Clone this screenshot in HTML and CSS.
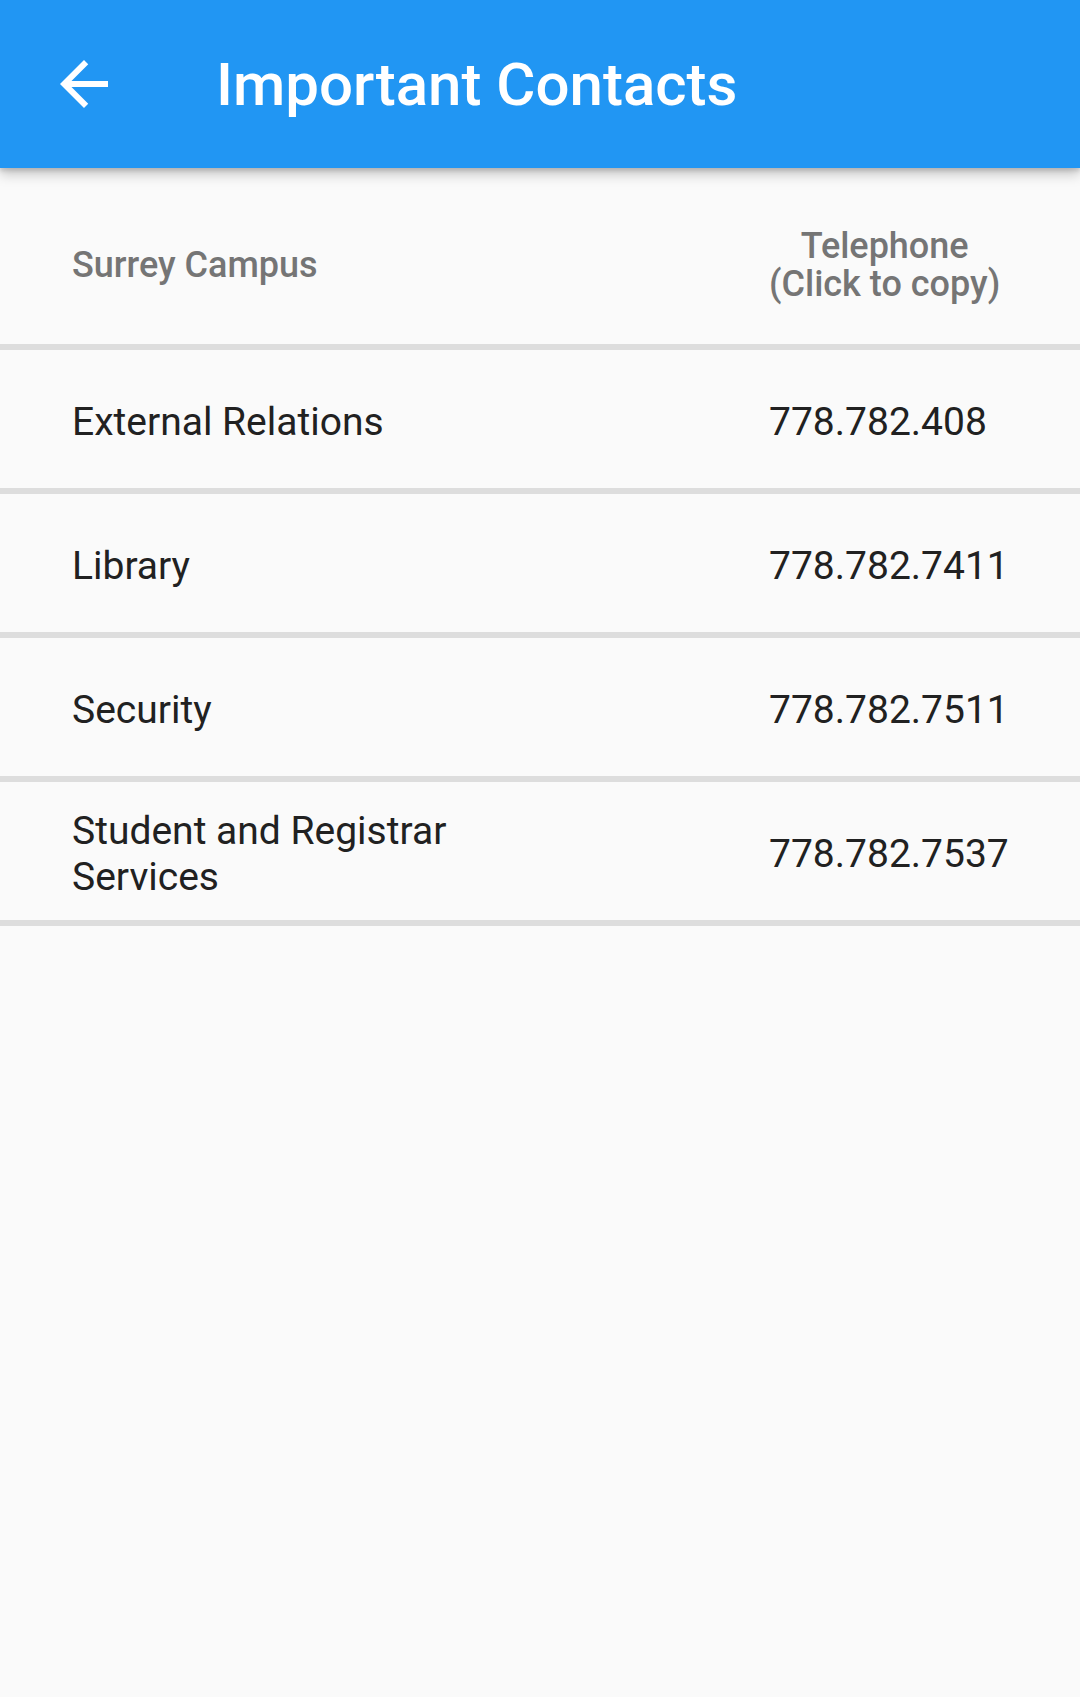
FILE: index.html
```html
<!DOCTYPE html>
<html>
<head>
<meta charset="utf-8">
<link rel="stylesheet" href="styles.css">
</head>
<body>
<header class="appbar">
  <div class="leading">
    <svg viewBox="0 0 24 24" width="72" height="72"><path fill="#fff" d="M20 11H7.83l5.59-5.59L12 4l-8 8 8 8 1.41-1.41L7.83 13H20v-2z"/></svg>
  </div>
  <h1 class="title">Important Contacts</h1>
</header>
<main class="table">
  <div class="row head">
    <div class="c1"><span class="name">Surrey Campus</span></div>
    <div class="c2 center">Telephone<br>(Click to copy)</div>
  </div>
  <div class="row">
    <div class="c1"><span class="name">External Relations</span></div>
    <div class="c2">778.782.408</div>
  </div>
  <div class="row">
    <div class="c1"><span class="name">Library</span></div>
    <div class="c2">778.782.7411</div>
  </div>
  <div class="row">
    <div class="c1"><span class="name">Security</span></div>
    <div class="c2">778.782.7511</div>
  </div>
  <div class="row">
    <div class="c1"><span class="name">Student and Registrar Services</span></div>
    <div class="c2">778.782.7537</div>
  </div>
</main>
</body>
</html>
```

FILE: styles.css
```css
html, body {
  margin: 0;
  padding: 0;
  background: #fafafa;
  font-family: Roboto, "Noto Sans", sans-serif;
}
body {
  width: 1080px;
  height: 1697px;
  overflow: hidden;
}
.appbar {
  position: relative;
  z-index: 2;
  height: 168px;
  background: #2196f3;
  display: flex;
  align-items: center;
  box-shadow: 0 6px 12px rgba(0,0,0,0.22), 0 3px 4px rgba(0,0,0,0.12);
}
.leading {
  width: 72px;
  height: 72px;
  margin-left: 48px;
  margin-right: 96px;
  display: flex;
}
.title {
  margin: 0;
  color: #fff;
  font-size: 60px;
  font-weight: 500;
  line-height: 1;
  padding-top: 2px;
}
.table {
  display: flex;
  flex-direction: column;
}
.row {
  display: grid;
  grid-template-columns: 697px auto;
  align-items: center;
  box-sizing: border-box;
  height: 144px;
  padding: 6px 0 0 72px;
  border-bottom: 6px solid #dddddd;
  color: #212121;
  font-size: 39px;
}
.row.head {
  height: 182px;
  padding-top: 18px;
  color: #757575;
  font-size: 36px;
  font-weight: 500;
  line-height: 38px;
}
.name {
  display: block;
  width: 480px;
}
.c2.center {
  text-align: center;
  justify-self: start;
  line-height: 38px;
}
```
